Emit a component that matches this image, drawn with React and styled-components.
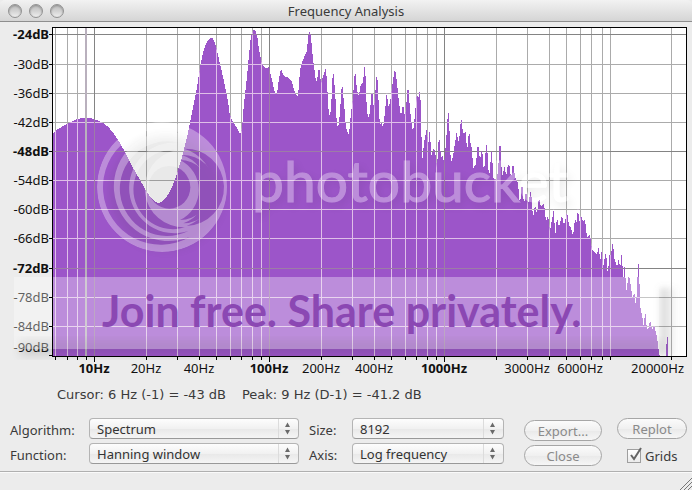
import React from 'react';
import styled, { createGlobalStyle } from 'styled-components';

const GlobalStyle = createGlobalStyle`
  * {
    box-sizing: border-box;
  }
  body {
    margin: 0;
    background: #ececec;
  }
  body, button, select, input {
    font-family: 'Noto Sans', 'Open Sans', sans-serif;
    font-size: 13px;
  }
`;

// low frequencies, drawn as a smooth curve: [x, y]
const lowBand = [
  [53, 133], [58, 129], [67, 124], [77, 119], [86, 118], [94, 119], [103, 123], [110, 129],
  [118, 140], [125, 152], [132, 166], [140, 180], [147, 192], [153, 200], [159, 203], [165, 199],
  [172, 187], [178, 170], [182, 157], [187, 137], [192, 113], [197, 87], [201, 62], [205, 46],
  [211, 38], [215, 43], [218, 55], [223, 77], [228, 102], [230, 115],
  [233, 122], [237, 128], [240, 133], [242, 127], [244, 103], [247, 77], [249, 55], [251, 37],
  [254, 30], [257, 35], [259, 49], [262, 63], [265, 68], [269, 67],
];

// the rest of the spectrum, point to point
const highBand = [
  [272, 80], [275, 93], [277, 94], [279, 78], [281, 69], [284, 76], [289, 78], [292, 82],
  [295, 93], [298, 97], [300, 70], [302, 62], [307, 51], [308, 37], [310, 30], [311, 37],
  [313, 60], [315, 73], [316, 83], [318, 75], [319, 66], [321, 83], [323, 77], [326, 68],
  [327, 83], [329, 117], [331, 110], [333, 68], [335, 90], [337, 127], [339, 124], [341, 97],
  [342, 82], [344, 103], [346, 128], [349, 135], [351, 113], [353, 97], [355, 69], [357, 90],
  [359, 97], [360, 87], [363, 82], [365, 62], [366, 90], [367, 113], [369, 118], [370, 110],
  [372, 89], [374, 110], [375, 97], [377, 70], [379, 110], [380, 128], [381, 121], [383, 128],
  [385, 112], [387, 90], [388, 107], [390, 103], [392, 87], [395, 68], [397, 83], [399, 103],
  [401, 116], [403, 104], [405, 117], [407, 97], [408, 83], [410, 110], [413, 133], [415, 114],
  [417, 92], [418, 100], [420, 89], [421, 110], [422, 163], [424, 143], [427, 127], [428, 147],
  [430, 127], [431, 157], [434, 147], [436, 157], [437, 168], [439, 134], [441, 157], [443, 155],
  [444, 165], [446, 143], [448, 111], [449, 115], [450, 147], [451, 163], [453, 157], [455, 143],
  [457, 130], [458, 143], [460, 134], [461, 115], [463, 133], [466, 132], [467, 153], [469, 130],
  [471, 147], [472, 147], [473, 169], [476, 164], [478, 142], [480, 160], [482, 148], [484, 173],
  [486, 146], [487, 144], [489, 178], [492, 147], [493, 178], [497, 180], [499, 157], [500, 135],
  [502, 177], [505, 165], [506, 178], [508, 164], [510, 167], [511, 180], [513, 162], [515, 177],
  [518, 183], [520, 205], [522, 181], [524, 205], [526, 190], [528, 205], [531, 190], [533, 218],
  [535, 205], [537, 214], [539, 197], [541, 207], [544, 203], [546, 222], [548, 215], [550, 231],
  [554, 208], [555, 238], [557, 217], [559, 227], [562, 215], [564, 225], [566, 217], [567, 212],
  [569, 225], [571, 228], [573, 236], [575, 219], [577, 223], [578, 204], [579, 223], [581, 215],
  [583, 222], [585, 219], [587, 237], [590, 234], [592, 250], [597, 254], [599, 246], [600, 262],
  [602, 249], [603, 268], [606, 251], [608, 277], [609, 255], [611, 255], [613, 241], [614, 257],
  [617, 267], [619, 258], [620, 270], [622, 250], [623, 282], [625, 262], [626, 293], [628, 280],
  [629, 275], [631, 287], [633, 302], [634, 289], [636, 307], [637, 287], [638, 267], [639, 261],
  [640, 305], [642, 315], [644, 328], [645, 308], [647, 330], [649, 327], [650, 319], [652, 330],
  [654, 325], [657, 337], [659, 353], [660, 356],
];

// Catmull-Rom through the points
const smooth = points =>
  points
    .slice(1)
    .map(([x, y], i) => {
      const [px, py] = points[i];
      const [ax, ay] = points[i - 1] || points[i];
      const [bx, by] = points[i + 2] || [x, y];
      return `C${px + (x - ax) / 6} ${py + (y - ay) / 6} ${x - (bx - px) / 6} ${y - (by - py) / 6} ${x} ${y}`;
    })
    .join(' ');

const spectrumPath = `M53 356 L53 133 ${smooth(lowBand)} ${highBand
  .map(([x, y]) => `L${x} ${y}`)
  .join(' ')} Z M666 356 V344 H667 V337 H668 V356 Z`;

const decibels = [
  { y: 34, label: '-24dB', major: true },
  { y: 64, label: '-30dB' },
  { y: 93, label: '-36dB' },
  { y: 122, label: '-42dB' },
  { y: 151, label: '-48dB', major: true },
  { y: 180, label: '-54dB' },
  { y: 209, label: '-60dB' },
  { y: 238, label: '-66dB' },
  { y: 268, label: '-72dB', major: true },
  { y: 297, label: '-78dB' },
  { y: 326, label: '-84dB' },
];

const hertz = [
  { x: 55 }, { x: 67 }, { x: 77 }, { x: 86 },
  { x: 94, label: '10Hz', major: true },
  { x: 146, label: '20Hz' }, { x: 177 },
  { x: 199, label: '40Hz' },
  { x: 216 }, { x: 230 }, { x: 241 }, { x: 252 }, { x: 261 },
  { x: 269, label: '100Hz', major: true },
  { x: 321, label: '200Hz' }, { x: 352 },
  { x: 374, label: '400Hz' },
  { x: 391 }, { x: 405 }, { x: 416 }, { x: 427 }, { x: 436 },
  { x: 444, label: '1000Hz', major: true },
  { x: 496 },
  { x: 527, label: '3000Hz' },
  { x: 549 }, { x: 566 },
  { x: 580, label: '6000Hz' },
  { x: 591 }, { x: 602 }, { x: 610 }, { x: 671 },
];

const Window = styled.div`
  display: flex;
  flex-direction: column;
  min-height: 100vh;
  background: #ececec;
  color: #3a3a3a;
`;

const TitleBar = styled.header`
  display: grid;
  grid-template-columns: 80px 1fr 80px;
  align-items: center;
  height: 22px;
  border-bottom: 1px solid #8e8e8e;
  border-radius: 5px 5px 0 0;
  background: linear-gradient(#f2f2f2, #d5d5d5);
`;

const Lights = styled.div`
  display: flex;
  gap: 7px;
  padding-left: 8px;
`;

const Light = styled.button`
  width: 14px;
  height: 14px;
  padding: 0;
  border: 1px solid #929292;
  border-radius: 50%;
  background: linear-gradient(#bdbdbd, #d2d2d2 50%, #efefef);
  box-shadow: inset 0 1px 2px #8f8f8f;
`;

const Title = styled.h1`
  margin: 0;
  font-size: 13px;
  font-weight: 400;
  line-height: 20px;
  text-align: center;
`;

const Chart = styled.svg`
  display: block;
  width: 100%;
  height: auto;
`;

const AxisText = styled.text`
  font-family: 'Noto Sans', 'Open Sans', sans-serif;
  font-size: 13px;
  font-weight: ${props => (props.$major ? 700 : 400)};
  fill: #111;
`;

const Brand = styled.text`
  font-family: Lato, sans-serif;
  font-size: 57px;
  fill: #fff;
  stroke: #fff;
  opacity: 0.33;
  filter: drop-shadow(3px 4px 4px rgba(0, 0, 0, 0.25));
`;

const Slogan = styled.text`
  font-family: Lato, sans-serif;
  font-size: 43px;
  font-weight: 700;
  fill: #8b48b3;
`;

const Readout = styled.div`
  display: flex;
  gap: 16px;
  padding: 9px 0 0 57px;
  font-family: 'DejaVu Sans', sans-serif;
  line-height: 20px;
`;

const Controls = styled.form`
  display: flex;
  align-items: flex-start;
  padding: 13px 5px 5px 10px;
`;

const Fields = styled.div`
  display: grid;
  flex: 1;
  grid-template-columns: 79px 210fr 53px 152fr;
  row-gap: 4px;
`;

const Label = styled.label`
  padding-top: 3px;
  padding-left: ${props => (props.$second ? 10 : 0)}px;
  line-height: 18px;
`;

const SelectBox = styled.div`
  position: relative;
  height: 21px;
  select {
    appearance: none;
    width: 100%;
    height: 21px;
    padding: 0 24px 0 7px;
    border: 1px solid #b4b4b4;
    border-bottom-color: #999;
    border-radius: 4px;
    background: linear-gradient(#fdfdfd, #f1f1f1 50%, #e8e8e8 51%, #f5f5f5);
    color: #333;
    line-height: 18px;
  }
  svg {
    position: absolute;
    top: 1px;
    right: 1px;
    pointer-events: none;
  }
`;

const Buttons = styled.div`
  display: flex;
  flex-direction: column;
  gap: 4px;
  width: ${props => props.$width}px;
  margin-left: ${props => props.$gap}px;
  padding-top: ${props => (props.$low ? 2 : 0)}px;
`;

const Button = styled.button`
  height: 21px;
  padding: 0;
  border: 1px solid #a6a6a6;
  border-radius: 11px;
  background: linear-gradient(#fbfbfb, #f0f0f0 50%, #e9e9e9 51%, #f6f6f6);
  color: #8a8a8a;
  line-height: 18px;
`;

const Check = styled.label`
  display: flex;
  align-items: center;
  gap: 4px;
  padding: 4px 0 0 10px;
  line-height: 18px;
  span {
    position: relative;
    display: flex;
  }
  input {
    appearance: none;
    width: 14px;
    height: 14px;
    margin: 0;
    border: 1px solid #9f9f9f;
    background: linear-gradient(#fff, #ebebeb);
  }
  input:not(:checked) + svg {
    display: none;
  }
  svg {
    position: absolute;
    top: -2px;
    left: 1px;
    pointer-events: none;
  }
`;

const StatusBar = styled.footer`
  display: flex;
  flex: 1;
  align-items: flex-end;
  justify-content: flex-end;
  border-top: 1px solid #b0b0b0;
  box-shadow: inset 0 1px #fafafa;
`;

const GridLines = ({ minor, major }) => (
  <g shapeRendering="crispEdges">
    {[false, true].map(isMajor => (
      <g key={String(isMajor)} fill={isMajor ? major : minor}>
        {hertz.filter(h => !!h.major === isMajor).map(h => (
          <rect key={h.x} x={h.x} y="28" width="1" height="328" />
        ))}
        {decibels.filter(d => !!d.major === isMajor).map(d => (
          <rect key={d.y} x="53" y={d.y} width="633" height="1" />
        ))}
      </g>
    ))}
  </g>
);

const Watermark = () => (
  <g>
    <defs>
      <mask id="rings">
        <g transform="translate(90 120) scale(0.33333)">
          <circle cx="217" cy="200" r="196" fill="#fff" />
          <g fill="#000">
            <path d="M275 40 A173 173 0 1 0 300 350 A164 164 0 1 1 275 40Z" />
            <path d="M265 68 A142 142 0 1 0 295 333 A136 136 0 1 1 265 68Z" />
            <path d="M260 90 A119 119 0 1 0 285 322 A117 117 0 0 1 260 90Z" />
            <ellipse cx="238" cy="202" rx="63" ry="64" />
            <path d="M270 120 A86 86 0 0 1 270 300 A100 100 0 0 0 270 120Z" />
            <path d="M275 105 A101 101 0 0 1 280 310 A108 108 0 0 0 275 105Z" />
            <path d="M282 86 A116 116 0 0 1 290 318 A122 122 0 0 0 282 86Z" />
          </g>
        </g>
      </mask>
      <filter id="soft" x="-20%" y="-20%" width="140%" height="140%">
        <feGaussianBlur stdDeviation="5" />
      </filter>
      <filter id="softer" x="-50%" y="-20%" width="200%" height="140%">
        <feGaussianBlur stdDeviation="3" />
      </filter>
      <linearGradient id="edge">
        <stop offset="0" stopColor="#777" stopOpacity="0.3" />
        <stop offset="1" stopColor="#777" stopOpacity="0" />
      </linearGradient>
    </defs>
    <circle cx="166" cy="193" r="57" fill="#333" opacity="0.1" filter="url(#soft)" />
    <circle cx="162" cy="187" r="65" fill="#fff" opacity="0.33" mask="url(#rings)" />
    <Brand x="252" y="202">photobucket</Brand>
    <rect x="660" y="288" width="18" height="68" fill="url(#edge)" filter="url(#softer)" />
    <rect x="20" y="340" width="640" height="16" fill="#333" opacity="0.15" filter="url(#soft)" />
    <rect x="14" y="277" width="645" height="72" fill="#fff" opacity="0.33" />
    <Slogan x="102" y="327">Join free. Share privately.</Slogan>
  </g>
);

const FrequencyChart = () => (
  <Chart viewBox="0 22 692 354" role="img" aria-label="Frequency spectrum">
    <defs>
      <clipPath id="filled">
        <path d={spectrumPath} />
      </clipPath>
    </defs>
    <rect x="52" y="27" width="635" height="330" fill="#fff" />
    <GridLines minor="#ababab" major="#848484" />
    <path d={spectrumPath} fill="#9c55c9" shapeRendering="crispEdges" />
    <g clipPath="url(#filled)">
      <GridLines minor="#dfbfe8" major="#9d7ca6" />
    </g>
    <rect x="85" y="28" width="2" height="328" fill="#b9b0bd" />
    {decibels.map(d => (
      <AxisText key={d.y} x="49" y={d.y + 5} textAnchor="end" $major={d.major}>{d.label}</AxisText>
    ))}
    <AxisText x="49" y="352" textAnchor="end">-90dB</AxisText>
    <Watermark />
    <g fill="#000" shapeRendering="crispEdges">
      <rect x="52" y="27" width="635" height="1" />
      <rect x="52" y="27" width="1" height="330" />
      <rect x="686" y="27" width="1" height="330" />
      <rect x="52" y="356" width="635" height="1" />
      {decibels.map(d => (
        <rect key={d.y} x="49" y={d.y} width="3" height="1" />
      ))}
      <rect x="49" y="355" width="3" height="1" />
      {hertz.map(h => (
        <rect key={h.x} x={h.x} y="357" width="1" height={h.major ? 5 : 3} />
      ))}
    </g>
    {hertz.filter(h => h.label).map(h => (
      <AxisText key={h.x} x={h.x} y="373" textAnchor="middle" $major={h.major}>{h.label}</AxisText>
    ))}
    <AxisText x="684" y="373" textAnchor="end">20000Hz</AxisText>
  </Chart>
);

const Select = ({ id, options }) => (
  <SelectBox>
    <select id={id}>
      {options.map(option => <option key={option}>{option}</option>)}
    </select>
    <svg width="20" height="19">
      <path d="M0.5 0V19" stroke="#dcdcdc" />
      <path d="M7 8L9.5 3.5L12 8ZM7 11L9.5 15.5L12 11Z" fill="#6a6a6a" />
    </svg>
  </SelectBox>
);

class App extends React.Component {
  state = {
    grids: true,
  };
  toggleGrids = () => {
    this.setState(prevState => ({ grids: !prevState.grids }));
  };
  render() {
    return (
      <Window>
        <GlobalStyle />
        <TitleBar>
          <Lights>
            <Light aria-label="Close window" />
            <Light aria-label="Minimize window" />
            <Light aria-label="Zoom window" />
          </Lights>
          <Title>Frequency Analysis</Title>
        </TitleBar>
        <FrequencyChart />
        <Readout>
          <span>Cursor: 6 Hz (-1) = -43 dB</span>
          <span>Peak: 9 Hz (D-1) = -41.2 dB</span>
        </Readout>
        <Controls onSubmit={e => e.preventDefault()}>
          <Fields>
            <Label htmlFor="algorithm">Algorithm:</Label>
            <Select id="algorithm" options={['Spectrum']} />
            <Label htmlFor="size" $second>Size:</Label>
            <Select id="size" options={['8192']} />
            <Label htmlFor="function">Function:</Label>
            <Select id="function" options={['Hanning window']} />
            <Label htmlFor="axis" $second>Axis:</Label>
            <Select id="axis" options={['Log frequency']} />
          </Fields>
          <Buttons $width={78} $gap={20} $low>
            <Button type="button">Export...</Button>
            <Button type="button">Close</Button>
          </Buttons>
          <Buttons $width={70} $gap={15}>
            <Button type="button">Replot</Button>
            <Check>
              <span>
                <input type="checkbox" checked={this.state.grids} onChange={this.toggleGrids} />
                <svg width="15" height="15">
                  <path d="M3 8L6 12L13 1" fill="none" stroke="#666" strokeWidth="2" />
                </svg>
              </span>
              Grids
            </Check>
          </Buttons>
        </Controls>
        <StatusBar>
          <svg width="13" height="13">
            <path d="M1 13L13 1M5 13L13 5M9 13L13 9" stroke="#777" />
          </svg>
        </StatusBar>
      </Window>
    );
  }
}

export default App;
